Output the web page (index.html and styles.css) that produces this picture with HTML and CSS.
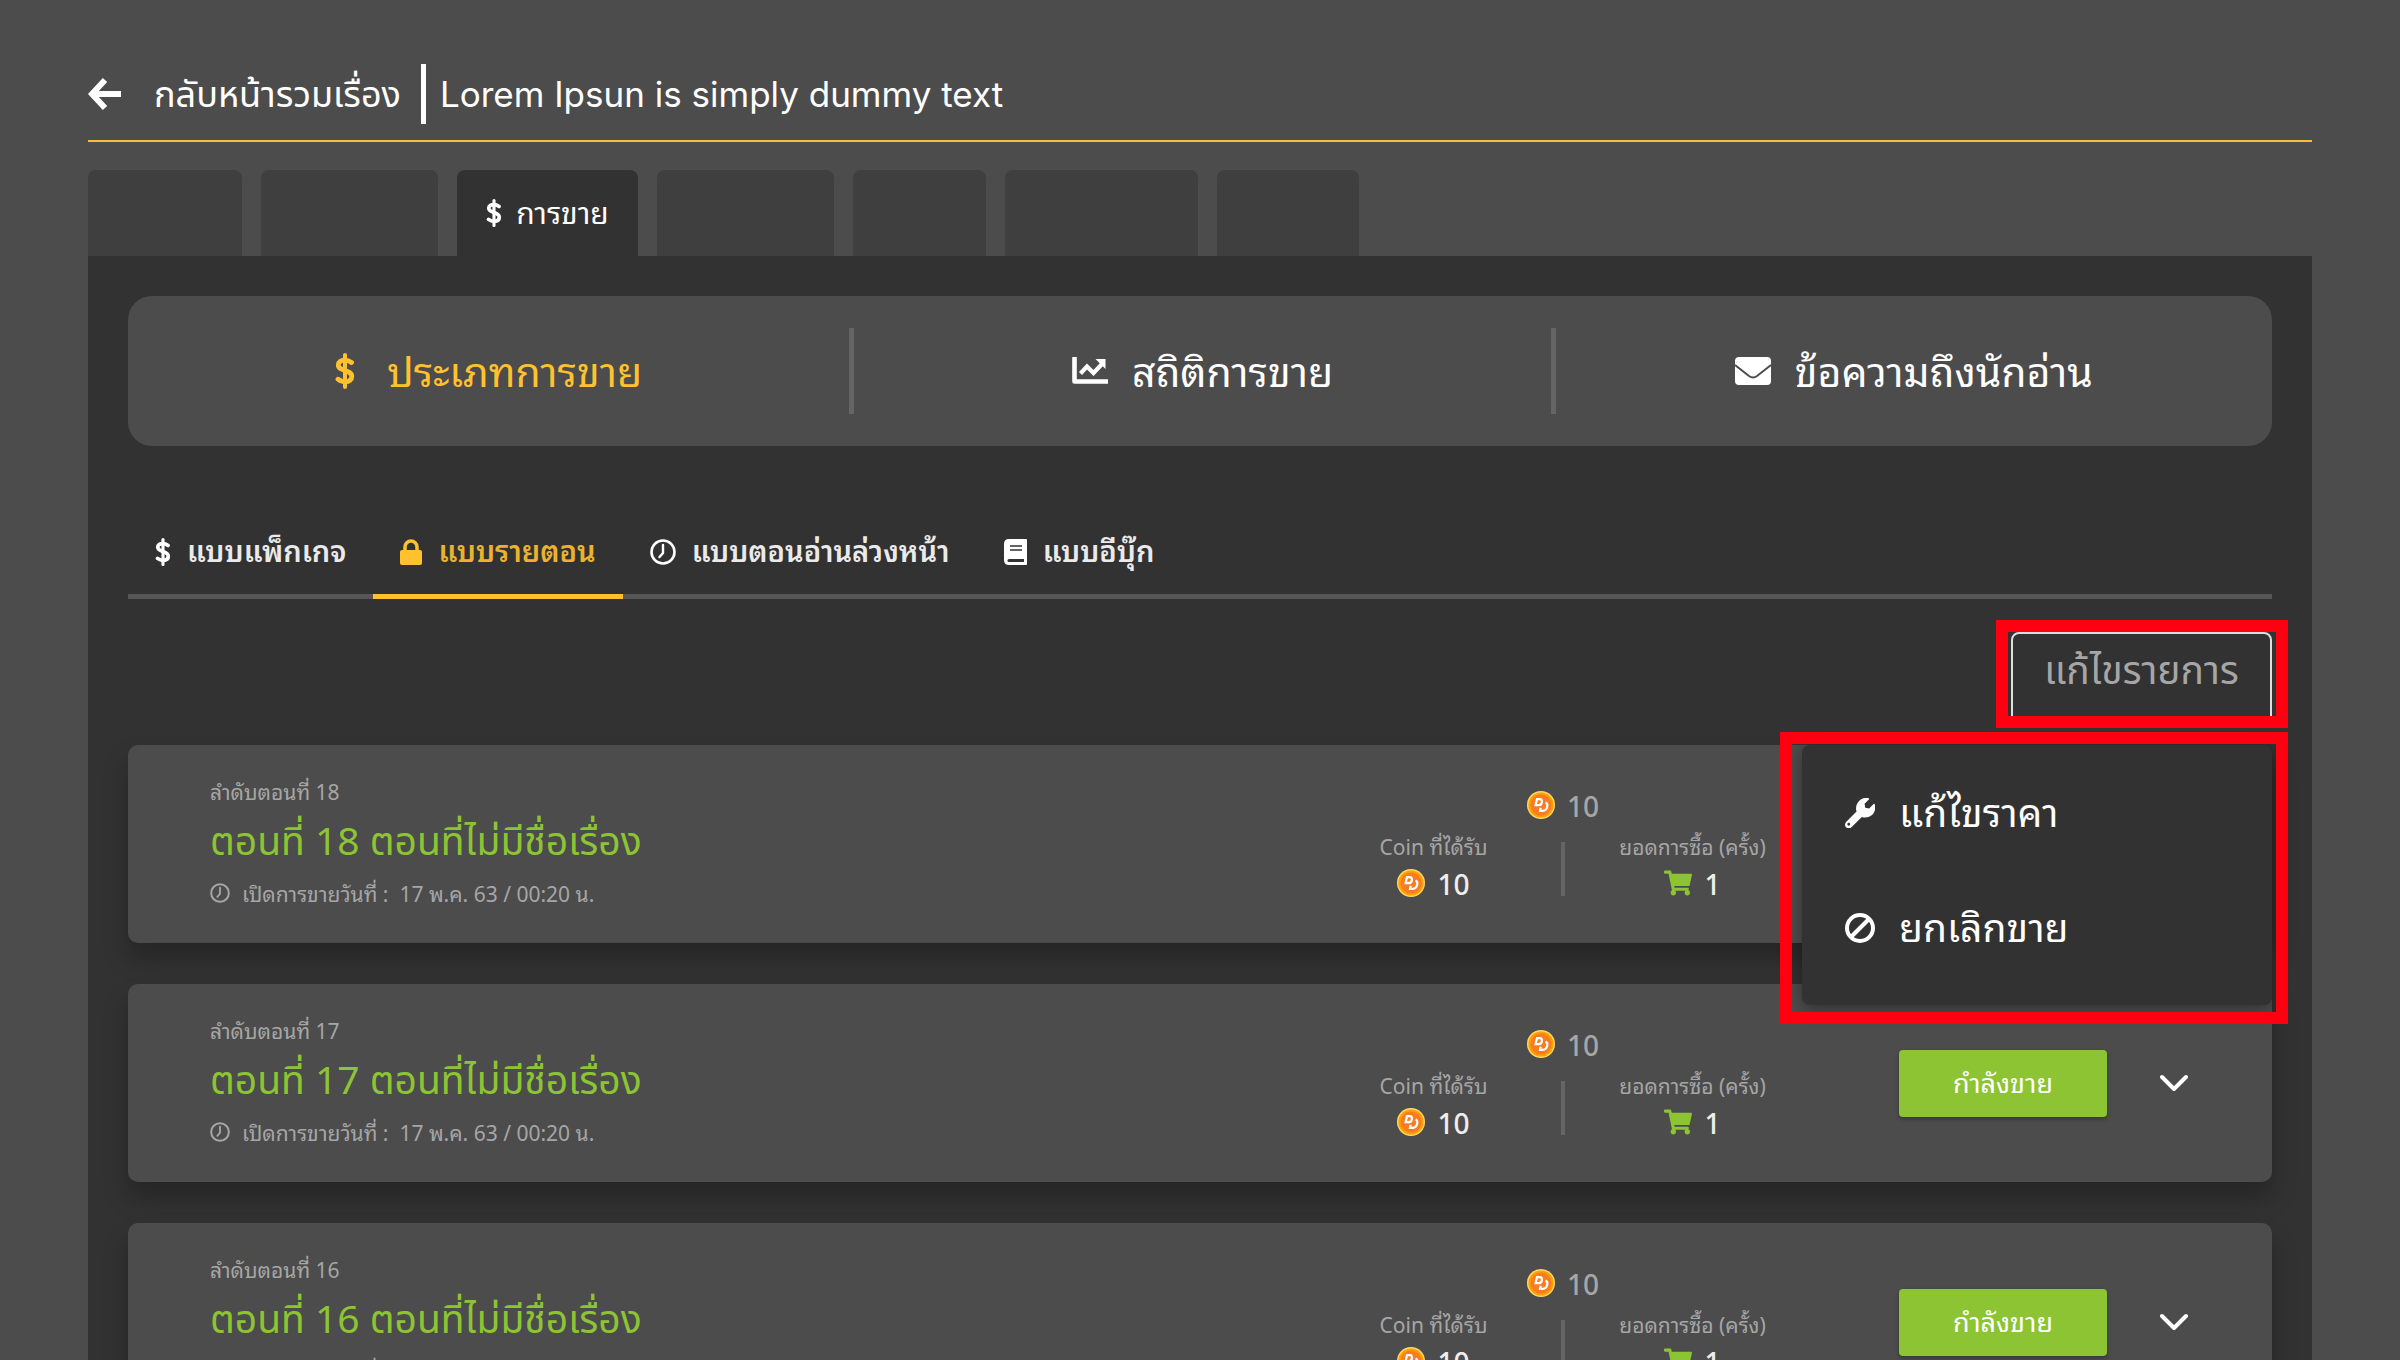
FILE: index.html
```html
<!doctype html>
<html lang="th">
<head>
  <meta charset="UTF-8" />
  <meta name="viewport" content="width=device-width, initial-scale=1.0" />
  <title>การขาย</title>
  <link rel="stylesheet" href="styles.css">
</head>
<body>
  <!-- Icônes partagées -->
  <svg class="sprite" aria-hidden="true">
    <symbol id="i-dollar" viewBox="0 0 20 36">
      <path d="M10 2v32" stroke="currentColor" stroke-width="4" stroke-linecap="round" />
      <path d="M16.500 9.500C14 7.600 11.500 7.200 9.500 7.200C6 7.200 3.300 9 3.300 12C3.300 18.500 16.800 16.500 16.800 23.300C16.800 27 14 28.800 10.500 28.800C7.800 28.800 5.200 28 3 26.200" fill="none" stroke="currentColor" stroke-width="4.800" stroke-linecap="round" />
    </symbol>
    <symbol id="i-clock" viewBox="0 0 26 26">
      <circle cx="13" cy="13" r="11.500" fill="none" stroke="currentColor" stroke-width="2.600" />
      <path d="M13 6v8l-3.500 4" fill="none" stroke="currentColor" stroke-width="2.400" stroke-linecap="round" />
    </symbol>
    <symbol id="i-coin" viewBox="0 0 28 28">
      <circle cx="14" cy="14" r="14" fill="#ffd968" />
      <circle cx="14" cy="14" r="12.600" fill="#ffa000" />
      <circle cx="14" cy="14" r="10.500" fill="#f97b22" />
      <path d="M10 8.200H12.800C16.400 8.200 15.300 14.200 11.500 14.200H8.600z" fill="none" stroke="#fff" stroke-width="2.200" stroke-linejoin="miter" />
      <path d="M18.600 11.500C22 13 20 19.800 16 19.800H13L13.700 16.800" fill="none" stroke="#fff" stroke-width="2.200" />
    </symbol>
    <symbol id="i-cart" viewBox="0 0 576 512">
      <path fill="currentColor" d="M528 301l47-208c4-15-8-29-23-29H159l-9-45C148 8 138 0 126 0H24C11 0 0 11 0 24v16c0 13 11 24 24 24h70l70 343c-17 10-28 28-28 49 0 31 25 56 56 56s56-25 56-56c0-16-7-30-17-40h210c-10 10-17 24-17 40 0 31 25 56 56 56s56-25 56-56c0-22-13-41-32-50l6-25c3-15-8-29-23-29H218l-7-32h294c11 0 21-8 23-19z" />
    </symbol>
    <symbol id="i-chevron" viewBox="0 0 28 18">
      <path d="M2 3l12 12L26 3" fill="none" stroke="currentColor" stroke-width="4" stroke-linecap="round" stroke-linejoin="round" />
    </symbol>
  </svg>

  <div class="page">
    <header class="header">
      <a href="#" class="back-link">
        <svg class="icon-back" viewBox="0 0 34 34"><path d="M17 3L4 17l13 14M5 17h28" fill="none" stroke="currentColor" stroke-width="6" /></svg>
        <span>กลับหน้ารวมเรื่อง</span>
      </a>
      <h1 class="story-title">Lorem Ipsun is simply dummy text</h1>
    </header>

    <nav class="tabs">
      <div class="tab"></div>
      <div class="tab"></div>
      <a href="#" class="tab active">
        <svg class="icon-dollar-sm"><use href="#i-dollar" /></svg>
        <span>การขาย</span>
      </a>
      <div class="tab"></div>
      <div class="tab"></div>
      <div class="tab"></div>
      <div class="tab"></div>
    </nav>

    <main class="panel">
      <nav class="sections">
        <a href="#" class="section active">
          <svg class="icon-dollar"><use href="#i-dollar" /></svg>
          <span>ประเภทการขาย</span>
        </a>
        <a href="#" class="section">
          <svg class="icon-section" viewBox="0 0 36 28">
            <path d="M2.500 1v23.500H35" fill="none" stroke="currentColor" stroke-width="4.600" stroke-linecap="round" stroke-linejoin="round" />
            <path d="M8.500 16.500l6.500-7 6.500 6.500 9-9.500" fill="none" stroke="currentColor" stroke-width="4.200" />
            <path d="M23.500 2H33.500V12z" fill="currentColor" />
          </svg>
          <span>สถิติการขาย</span>
        </a>
        <a href="#" class="section">
          <svg class="icon-section" viewBox="0 0 36 28">
            <rect width="36" height="28" rx="4" fill="currentColor" />
            <path d="M0 8l14 11q4 3 8 0L36 8" fill="none" stroke="#4c4c4c" stroke-width="2" />
          </svg>
          <span>ข้อความถึงนักอ่าน</span>
        </a>
      </nav>

      <nav class="types">
        <a href="#" class="type">
          <svg class="icon-dollar-sm"><use href="#i-dollar" /></svg>
          <span>แบบแพ็กเกจ</span>
        </a>
        <a href="#" class="type active">
          <svg class="icon-lock" viewBox="0 0 22 26">
            <rect y="11" width="22" height="15" rx="2" fill="currentColor" />
            <path d="M5 13V8a6 6 0 0 1 12 0v5" fill="none" stroke="currentColor" stroke-width="3.500" />
          </svg>
          <span>แบบรายตอน</span>
        </a>
        <a href="#" class="type">
          <svg class="icon-type"><use href="#i-clock" /></svg>
          <span>แบบตอนอ่านล่วงหน้า</span>
        </a>
        <a href="#" class="type">
          <svg class="icon-book" viewBox="0 0 23 26">
            <path fill="currentColor" d="M5 0H22q1 0 1 1V25q0 1-1 1H5q-5 0-5-5V5Q0 0 5 0z" />
            <path d="M6 7h12M6 11h12" stroke="#333" stroke-width="1.600" />
            <path d="M5 20H20v3H5q-1.500 0-1.500-1.500T5 20z" fill="#333" />
          </svg>
          <span>แบบอีบุ๊ก</span>
        </a>
      </nav>

      <div class="toolbar">
        <div class="edit marked">
          <button type="button" class="edit-button">แก้ไขรายการ</button>
        </div>
        <div class="menu marked">
          <button type="button" class="menu-item">
            <svg class="icon-menu" viewBox="0 0 512 512"><path fill="currentColor" d="M508 109c-2-9-14-12-21-5l-74 74-68-11-11-68 74-74c7-7 4-19-6-21C345-11 286 4 240 50c-49 49-63 120-43 182L19 410c-25 25-25 66 0 91s66 25 91 0l178-178c63 21 134 6 182-43 46-46 57-112 38-171zM64 472c-13 0-24-11-24-24s11-24 24-24 24 11 24 24-11 24-24 24z" /></svg>
            <span>แก้ไขราคา</span>
          </button>
          <button type="button" class="menu-item">
            <svg class="icon-menu" viewBox="0 0 30 30"><circle cx="15" cy="15" r="13" fill="none" stroke="currentColor" stroke-width="4" /><path d="M6 24L24 6" stroke="currentColor" stroke-width="4" /></svg>
            <span>ยกเลิกขาย</span>
          </button>
        </div>
      </div>

      <div class="episodes">
        <article class="episode covered">
          <div class="info">
            <p class="order">ลำดับตอนที่ 18</p>
            <h2 class="name">ตอนที่ 18 ตอนที่ไม่มีชื่อเรื่อง</h2>
            <p class="date"><svg class="icon-date"><use href="#i-clock" /></svg>เปิดการขายวันที่ :&nbsp; 17 พ.ค. 63 / 00:20 น.</p>
          </div>
          <div class="stats">
            <p class="price"><svg class="icon-coin"><use href="#i-coin" /></svg>10</p>
            <dl class="stat">
              <dt>Coin ที่ได้รับ</dt>
              <dd><svg class="icon-coin"><use href="#i-coin" /></svg>10</dd>
            </dl>
            <span class="divider"></span>
            <dl class="stat">
              <dt>ยอดการซื้อ (ครั้ง)</dt>
              <dd><svg class="icon-cart"><use href="#i-cart" /></svg>1</dd>
            </dl>
          </div>
          <button type="button" class="status">กำลังขาย</button>
          <button type="button" class="toggle" aria-label="ตอนที่ 18"><svg class="icon-chevron"><use href="#i-chevron" /></svg></button>
        </article>

        <article class="episode">
          <div class="info">
            <p class="order">ลำดับตอนที่ 17</p>
            <h2 class="name">ตอนที่ 17 ตอนที่ไม่มีชื่อเรื่อง</h2>
            <p class="date"><svg class="icon-date"><use href="#i-clock" /></svg>เปิดการขายวันที่ :&nbsp; 17 พ.ค. 63 / 00:20 น.</p>
          </div>
          <div class="stats">
            <p class="price"><svg class="icon-coin"><use href="#i-coin" /></svg>10</p>
            <dl class="stat">
              <dt>Coin ที่ได้รับ</dt>
              <dd><svg class="icon-coin"><use href="#i-coin" /></svg>10</dd>
            </dl>
            <span class="divider"></span>
            <dl class="stat">
              <dt>ยอดการซื้อ (ครั้ง)</dt>
              <dd><svg class="icon-cart"><use href="#i-cart" /></svg>1</dd>
            </dl>
          </div>
          <button type="button" class="status">กำลังขาย</button>
          <button type="button" class="toggle" aria-label="ตอนที่ 17"><svg class="icon-chevron"><use href="#i-chevron" /></svg></button>
        </article>

        <article class="episode">
          <div class="info">
            <p class="order">ลำดับตอนที่ 16</p>
            <h2 class="name">ตอนที่ 16 ตอนที่ไม่มีชื่อเรื่อง</h2>
            <p class="date"><svg class="icon-date"><use href="#i-clock" /></svg>เปิดการขายวันที่ :&nbsp; 17 พ.ค. 63 / 00:20 น.</p>
          </div>
          <div class="stats">
            <p class="price"><svg class="icon-coin"><use href="#i-coin" /></svg>10</p>
            <dl class="stat">
              <dt>Coin ที่ได้รับ</dt>
              <dd><svg class="icon-coin"><use href="#i-coin" /></svg>10</dd>
            </dl>
            <span class="divider"></span>
            <dl class="stat">
              <dt>ยอดการซื้อ (ครั้ง)</dt>
              <dd><svg class="icon-cart"><use href="#i-cart" /></svg>1</dd>
            </dl>
          </div>
          <button type="button" class="status">กำลังขาย</button>
          <button type="button" class="toggle" aria-label="ตอนที่ 16"><svg class="icon-chevron"><use href="#i-chevron" /></svg></button>
        </article>
      </div>
    </main>
  </div>
</body>
</html>
```

FILE: styles.css
```css
* {
  margin: 0;
  padding: 0;
  box-sizing: border-box;
}

body {
  background-color: #4c4c4c;
  color: #fff;
  font-family: "Noto Sans Thai Looped", "Loma", "Noto Sans", sans-serif;
  font-size: 30px;
}

a {
  color: inherit;
  text-decoration: none;
}

button {
  border: none;
  background: none;
  color: inherit;
  font: inherit;
  cursor: pointer;
}

svg {
  flex: none;
}

.sprite {
  position: absolute;
  width: 0;
  height: 0;
}

.page {
  height: 100vh;
  overflow: hidden;
  padding: 44px 88px 0;
}

/* En-tête */
.header {
  display: flex;
  align-items: center;
  height: 98px;
  padding-top: 4px;
  border-bottom: 2px solid #fcc02e;
  font-family: Inter, "Noto Sans Thai", sans-serif;
  font-size: 36px;
}

.back-link {
  display: flex;
  align-items: center;
  gap: 32px;
  line-height: 60px;
}

.story-title {
  margin-left: 20px;
  padding-left: 14px;
  border-left: 5px solid #fff;
  font-size: 35px;
  font-weight: 400;
  line-height: 60px;
}

/* Onglets */
.tabs {
  display: flex;
  gap: 19px;
  margin-top: 28px;
}

.tab {
  display: flex;
  align-items: center;
  justify-content: center;
  gap: 14px;
  width: 177px;
  height: 86px;
  border-radius: 8px 8px 0 0;
  background-color: #3f3f3f;
}

.tab:nth-child(1) {
  width: 154px;
}

.tab:nth-child(5) {
  width: 133px;
}

.tab:nth-child(6) {
  width: 193px;
}

.tab:nth-child(7) {
  width: 142px;
}

.tab.active {
  width: 181px;
  background-color: #323232;
}

.panel {
  height: 100%;
  padding: 40px;
  background-color: #323232;
}

/* Sections */
.sections {
  display: grid;
  grid-template-columns: 36fr 35fr 36fr;
  height: 150px;
  padding: 32px 0;
  border-radius: 24px;
  background-color: #4c4c4c;
  font-size: 41px;
}

.section {
  display: flex;
  align-items: center;
  justify-content: center;
  gap: 24px;
}

.section + .section {
  border-left: 5px solid #656565;
}

.section.active {
  gap: 32px;
}

.section.active,
.type.active {
  color: #ffc22e;
}

/* Les boucles thaïes descendent bas, on remonte le texte face à l'icône */
.tab span,
.section span,
.type span,
.menu-item span {
  padding-bottom: 6px;
}

/* Types de vente */
.types {
  display: flex;
  margin-top: 60px;
  border-bottom: 5px solid #565656;
  font-size: 29px;
  font-weight: 600;
}

.type {
  display: flex;
  align-items: center;
  gap: 16px;
  height: 93px;
  margin-bottom: -5px;
  padding: 4px 27px 0;
  border-bottom: 5px solid transparent;
}

.type.active {
  border-color: #ffc22e;
}

.type span {
  opacity: 0.9;
}

/* Barre d'outils et menu */
.toolbar {
  display: flex;
  justify-content: flex-end;
  position: relative;
  z-index: 2;
  padding: 33px 0 19px;
}

.marked::after {
  content: "";
  position: absolute;
  inset: -12px -16px -2px -15px;
  border: 12px solid #ff0010;
  pointer-events: none;
}

.edit {
  position: relative;
}

.edit-button {
  width: 261px;
  height: 94px;
  padding-bottom: 14px;
  border: 2px solid #ddd;
  border-radius: 8px;
  color: #a6a6a6;
  font-family: "Noto Sans Thai", sans-serif;
  font-size: 39px;
}

.menu {
  position: absolute;
  top: 100%;
  right: 0;
  width: 470px;
  padding: 10px 0 20px;
  border-radius: 8px;
  background-color: #323232;
  box-shadow: 0 4px 16px rgba(0, 0, 0, 0.35);
}

.menu.marked::after {
  inset: -13px -16px -19px -22px;
}

.menu-item {
  display: flex;
  align-items: center;
  gap: 24px;
  width: 100%;
  height: 115px;
  padding: 0 43px;
  font-size: 39px;
}

/* Épisodes */
.episodes {
  display: flex;
  flex-direction: column;
  gap: 41px;
}

.episode {
  display: flex;
  align-items: center;
  height: 198px;
  padding: 0 84px 0 82px;
  border-radius: 10px;
  background-color: #4c4c4c;
  box-shadow: 0 16px 24px rgba(0, 0, 0, 0.25);
}

/* Actions masquées tant que le menu est ouvert par-dessus */
.episode.covered button {
  visibility: hidden;
}

.info {
  flex: 1;
}

.order,
.date,
.stat dt {
  padding-bottom: 4px;
  color: #a6a6a6;
  font-size: 21px;
  line-height: 30px;
}

.name {
  color: #8dc434;
  font-family: "Noto Sans Thai", sans-serif;
  font-size: 39px;
  font-weight: 400;
  line-height: 68px;
}

.date {
  display: flex;
  align-items: center;
  gap: 12px;
}

.stats {
  display: grid;
  grid-template-columns: 1fr 4px 1fr;
  align-items: center;
  width: 514px;
  margin-right: 79px;
}

.price,
.stat dd {
  display: flex;
  align-items: center;
  justify-content: center;
  gap: 12px;
  font-size: 28px;
  font-weight: 500;
  line-height: 36px;
}

.price {
  grid-column: 1 / -1;
  margin-bottom: 8px;
  color: #a6a6a6;
}

.stat {
  text-align: center;
}

.stat dd {
  color: #eee;
}

.divider {
  height: 54px;
  margin-top: 6px;
  background-color: #656565;
}

.status {
  width: 208px;
  height: 67px;
  padding-bottom: 6px;
  border-radius: 4px;
  background-color: #8dc434;
  box-shadow: 0 2px 4px rgba(0, 0, 0, 0.3);
  font-size: 27px;
}

.toggle {
  display: flex;
  margin-left: 53px;
}

/* Icônes */
.icon-back {
  width: 34px;
  height: 34px;
}

.icon-dollar {
  width: 20px;
  height: 36px;
}

.icon-dollar-sm {
  width: 16px;
  height: 28px;
}

.icon-section {
  width: 36px;
  height: 28px;
}

.icon-lock {
  width: 22px;
  height: 26px;
}

.icon-type {
  width: 26px;
  height: 26px;
}

.icon-book {
  width: 23px;
  height: 26px;
}

.icon-menu {
  width: 30px;
  height: 30px;
}

.icon-date {
  width: 20px;
  height: 20px;
}

.icon-coin {
  width: 28px;
  height: 28px;
}

.icon-cart {
  width: 28px;
  height: 26px;
  color: #8dc434;
}

.icon-chevron {
  width: 28px;
  height: 18px;
}
```
